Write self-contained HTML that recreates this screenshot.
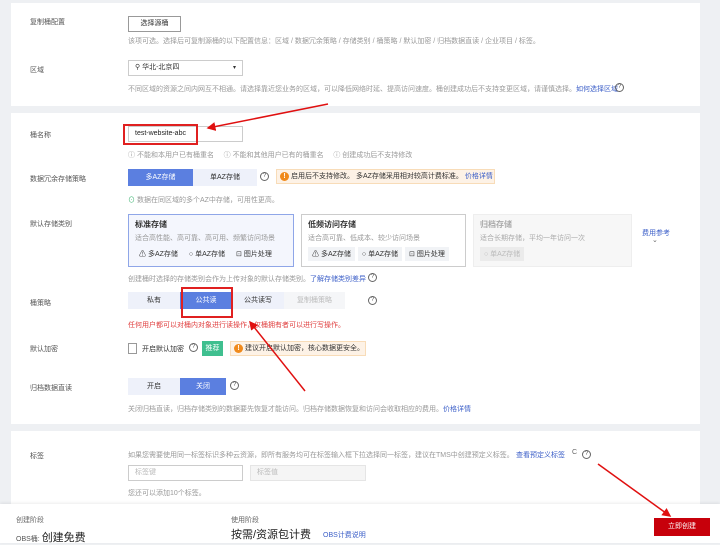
<!DOCTYPE html>
<html><head><meta charset="utf-8"><style>
*{margin:0;padding:0;box-sizing:border-box}
body{width:720px;height:543px;background:#eef0f3;position:relative;overflow:hidden;font-family:"Liberation Sans","Noto Sans CJK SC",sans-serif;font-size:7px;color:#333}
.a{position:absolute;white-space:nowrap}
.card{position:absolute;background:#fff;left:11px;width:689px}
.lbl{position:absolute;left:30px;color:#555;font-size:7px}
.g{color:#999}
.btn{position:absolute;text-align:center;font-size:7px;line-height:17px;height:17px}
.blue{background:#5b7fe0;color:#fff}
.lb{background:#eef1fa;color:#333}
.q{position:absolute;width:9px;height:9px;border:1px solid #666;border-radius:50%;font-size:6px;line-height:7px;text-align:center;color:#555}
.lnk{color:#3c5fc8}
.sc{position:absolute;top:214px;height:53px;border:1px solid #ccc;padding:4px 6px}
.sc b{font-size:8px;display:block;color:#333}
.tag{display:inline-block;background:#f1f3f6;padding:2px 4px;margin-right:3px;font-size:7px}
.warn{position:absolute;background:#fdf2e6;border:1px solid #f8dcb8;height:15px;line-height:13px;padding-left:14px;font-size:7px}
.warn:before{content:"!";position:absolute;left:3px;top:2px;width:9px;height:9px;border-radius:50%;background:#f08a1c;color:#fff;font-size:7px;line-height:9px;text-align:center;font-weight:bold}
.inp{position:absolute;border:1px solid #ccc;background:#fff;height:16px;line-height:14px;padding-left:6px;font-size:7px}
</style></head><body>

<div class="card" style="top:3px;height:103px"></div>
<div class="card" style="top:113px;height:311px"></div>
<div class="card" style="top:431px;height:80px"></div>
<div style="position:absolute;left:0;top:504px;width:720px;height:39px;background:#fff;box-shadow:0 -1px 3px rgba(0,0,0,.08)"></div>

<div class="lbl a" style="top:17px">复制桶配置</div>
<div class="inp" style="left:128px;top:16px;width:53px;text-align:center;padding:0;color:#333;border-color:#999">选择源桶</div>
<div class="a g" style="left:128px;top:36px">该项可选。选择后可复制源桶的以下配置信息：区域 / 数据冗余策略 / 存储类别 / 桶策略 / 默认加密 / 归档数据直读 / 企业项目 / 标签。</div>

<div class="lbl a" style="top:65px">区域</div>
<div class="inp" style="left:128px;top:60px;width:115px">⚲ 华北-北京四<span style="position:absolute;right:6px;font-size:6px">▾</span></div>
<div class="a g" style="left:128px;top:84px">不同区域的资源之间内网互不相通。请选择靠近您业务的区域，可以降低网络时延、提高访问速度。桶创建成功后不支持变更区域，请谨慎选择。<span class="lnk">如何选择区域</span></div>
<div class="q" style="left:615px;top:83px">?</div>

<div class="lbl a" style="top:130px">桶名称</div>
<div class="inp" style="left:128px;top:126px;width:115px;color:#222">test-website-abc</div>
<div style="position:absolute;left:123px;top:124px;width:75px;height:21px;border:2px solid #e02020"></div>
<div class="a g" style="left:128px;top:150px">ⓘ 不能和本用户已有桶重名 &nbsp;&nbsp;&nbsp;&nbsp;ⓘ 不能和其他用户已有的桶重名 &nbsp;&nbsp;&nbsp;&nbsp;ⓘ 创建成功后不支持修改</div>

<div class="lbl a" style="top:174px">数据冗余存储策略</div>
<div class="btn blue" style="left:128px;top:169px;width:65px">多AZ存储</div>
<div class="btn lb" style="left:193px;top:169px;width:64px">单AZ存储</div>
<div class="q" style="left:260px;top:172px">?</div>
<div class="warn" style="left:276px;top:169px;width:219px">启用后不支持修改。 多AZ存储采用相对较高计费标准。 <span class="lnk">价格详情</span></div>
<div class="a g" style="left:128px;top:195px"><span style="color:#3cb371">⊙</span> 数据在同区域的多个AZ中存储，可用性更高。</div>

<div class="lbl a" style="top:219px">默认存储类别</div>
<div class="sc" style="left:128px;width:166px;border-color:#8fa6e8;background:#f4f6fd"><b>标准存储</b><div class="g" style="margin:3px 0 4px">适合高性能、高可靠、高可用、频繁访问场景</div><span class="tag" style="background:transparent">⚠ 多AZ存储</span><span class="tag" style="background:transparent">○ 单AZ存储</span><span class="tag" style="background:transparent">⊡ 图片处理</span></div>
<div class="sc" style="left:301px;width:165px"><b>低频访问存储</b><div class="g" style="margin:3px 0 4px">适合高可靠、低成本、较少访问场景</div><span class="tag">⚠ 多AZ存储</span><span class="tag">○ 单AZ存储</span><span class="tag">⊡ 图片处理</span></div>
<div class="sc" style="left:473px;width:159px;background:#f7f7f7;border-color:#eee;color:#aaa"><b style="color:#aaa">归档存储</b><div style="margin:3px 0 4px">适合长期存储，平均一年访问一次</div><span class="tag" style="background:#ebebeb;color:#bbb">○ 单AZ存储</span></div>
<div class="a lnk" style="left:642px;top:228px">费用参考</div>
<div class="a" style="left:652px;top:236px;color:#666">⌄</div>
<div class="a g" style="left:128px;top:274px">创建桶时选择的存储类别会作为上传对象的默认存储类别。<span class="lnk">了解存储类别差异</span></div>
<div class="q" style="left:368px;top:273px">?</div>

<div class="lbl a" style="top:298px">桶策略</div>
<div class="btn lb" style="left:128px;top:292px;width:52px">私有</div>
<div class="btn blue" style="left:180px;top:292px;width:52px">公共读</div>
<div class="btn lb" style="left:232px;top:292px;width:52px">公共读写</div>
<div class="btn" style="left:284px;top:292px;width:61px;background:#f5f6f8;color:#bbb">复制桶策略</div>
<div class="q" style="left:368px;top:296px">?</div>
<div style="position:absolute;left:181px;top:287px;width:52px;height:31px;border:2px solid #e02020"></div>
<div class="a" style="left:128px;top:320px;color:#e04040">任何用户都可以对桶内对象进行读操作，仅桶拥有者可以进行写操作。</div>

<div class="lbl a" style="top:344px">默认加密</div>
<div style="position:absolute;left:128px;top:343px;width:9px;height:11px;border:1px solid #999;background:#fff"></div>
<div class="a" style="left:142px;top:344px">开启默认加密</div>
<div class="q" style="left:189px;top:343px">?</div>
<div class="btn" style="left:202px;top:341px;width:21px;height:15px;line-height:15px;background:#3fbf8f;color:#fff">推荐</div>
<div class="warn" style="left:230px;top:341px;width:136px">建议开启默认加密，核心数据更安全。</div>

<div class="lbl a" style="top:383px">归档数据直读</div>
<div class="btn lb" style="left:128px;top:378px;width:52px">开启</div>
<div class="btn blue" style="left:180px;top:378px;width:46px">关闭</div>
<div class="q" style="left:230px;top:381px">?</div>
<div class="a g" style="left:128px;top:404px">关闭归档直读，归档存储类别的数据要先恢复才能访问。归档存储数据恢复和访问会收取相应的费用。<span class="lnk">价格详情</span></div>

<div class="lbl a" style="top:451px">标签</div>
<div class="a g" style="left:128px;top:450px">如果您需要使用同一标签标识多种云资源，即所有服务均可在标签输入框下拉选择同一标签，建议在TMS中创建预定义标签。</div>
<div class="a lnk" style="left:516px;top:450px">查看预定义标签</div>
<div class="a" style="left:572px;top:449px;color:#666">C</div>
<div class="q" style="left:582px;top:450px">?</div>
<div class="inp" style="left:128px;top:465px;width:115px;color:#bbb">标签键</div>
<div class="inp" style="left:250px;top:465px;width:116px;color:#bbb;background:#f5f5f5;border-color:#e5e5e5">标签值</div>
<div class="a g" style="left:128px;top:488px">您还可以添加10个标签。</div>

<div class="a" style="left:16px;top:515px;color:#666">创建阶段</div>
<div class="a" style="left:16px;top:529px;color:#555">OBS桶: <span style="font-size:11px;color:#222">创建免费</span></div>
<div class="a" style="left:231px;top:515px;color:#666">使用阶段</div>
<div class="a" style="left:231px;top:526px;font-size:11px;color:#222">按需/资源包计费</div>
<div class="a lnk" style="left:323px;top:530px">OBS计费说明</div>
<div class="btn" style="left:654px;top:518px;width:56px;background:#c7000b;color:#fff;height:18px;line-height:18px">立即创建</div>

<svg style="position:absolute;left:0;top:0" width="720" height="543">
<defs><marker id="m" markerWidth="6" markerHeight="6" refX="5" refY="3" orient="auto"><path d="M0,0 L6,3 L0,6z" fill="#e01010"/></marker></defs>
<g stroke="#e01010" stroke-width="1.5" fill="none" marker-end="url(#m)">
<line x1="328" y1="104" x2="208" y2="128"/>
<line x1="305" y1="391" x2="250" y2="322"/>
<line x1="598" y1="464" x2="670" y2="516"/>
</g></svg>
</body></html>
